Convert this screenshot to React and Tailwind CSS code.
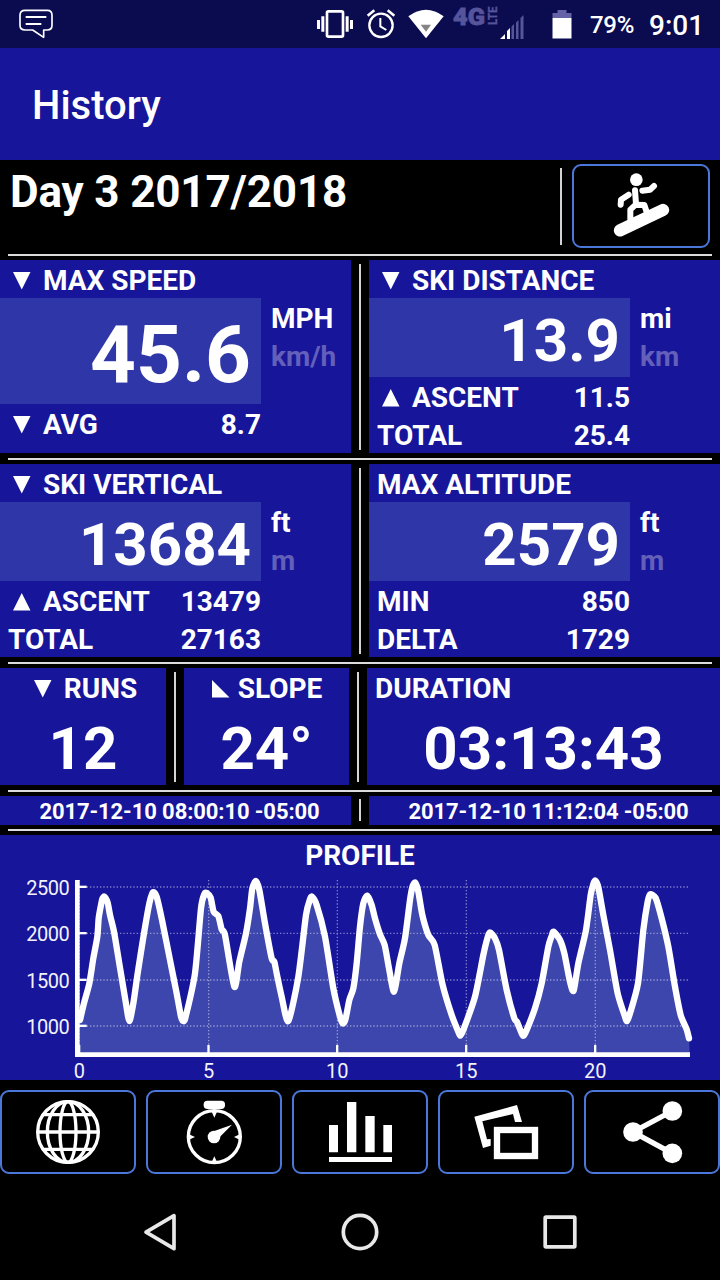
import clsx from "clsx";

const ARROWS = {
    down: "M1 1H18.5L9.75 18.5Z",
    up: "M1 18.5H18.5L9.75 1Z",
    slope: "M1 1V18.5H18.5Z",
};

function Arrow({ dir }) {
    return (
        <svg className="w-[20px] h-[20px] fill-white shrink-0" viewBox="0 0 20 20">
            <path d={ARROWS[dir]} />
        </svg>
    );
}

function Label({ arrow, children, className }) {
    return (
        <div className={clsx("flex items-center h-[38px] text-[28px] leading-[38px] pt-[4px]", className)}>
            {arrow ? <div className={clsx("pl-[4px]", arrow === "slope" ? "pr-[7px]" : "pr-[11px]")}><Arrow dir={arrow} /></div> : null}
            <span>{children}</span>
        </div>
    );
}

function HLine({ className }) {
    return <div className={clsx("mx-[8px] h-[2px] bg-[#dcdcdc] shrink-0", className)} />;
}

function VLine({ className }) {
    return <div className={clsx("w-[2px] bg-[#d4d4d4] shrink-0", className)} />;
}

function StatPanel({ arrow, title, value, big, units, rows }) {
    return (
        <div className="w-[351px] bg-[#171599]">
            <Label arrow={arrow} className="pl-[8px]">{title}</Label>
            <div className="flex">
                <div className="w-[261px]">
                    <div className={clsx("bg-[#2f37a8] flex items-center justify-end pr-[10px]", big ? "h-[106px] text-[80px] pt-[8px]" : "h-[79px] text-[60px] pt-[7px]")}>
                        <span className="leading-none">{value}</span>
                    </div>
                    {rows.map((row) => (
                        <div key={row.label} className="flex justify-between pl-[8px]">
                            <Label arrow={row.arrow}>{row.label}</Label>
                            <Label>{row.value}</Label>
                        </div>
                    ))}
                </div>
                <div className="pl-[10px]">
                    <Label>{units[0]}</Label>
                    <Label className="text-[#6460ba]">{units[1]}</Label>
                </div>
            </div>
        </div>
    );
}

function StatusBar() {
    return (
        <div className="h-[48px] bg-[#0b0b50] flex items-center font-medium">
            <svg className="w-[36px] h-[32px] ml-[18px]" viewBox="54 24 108 96" fill="none" stroke="#fff" strokeWidth="5" strokeLinejoin="round">
                <path d="M75 31H142Q156 31 156 46V76Q156 90 142 90H131V112L98 90H75Q60 90 60 76V46Q60 31 75 31Z" />
                <path d="M77 51H139M77 72H124" strokeWidth="6" />
            </svg>
            <svg className="w-[36px] h-[48px] ml-[263px]" viewBox="51 0 108 144" fill="#fff">
                <rect x="81" y="34" width="48" height="76" rx="4" fill="none" stroke="#fff" strokeWidth="8" />
                <path d="M51 60h9v27h-9zM64 49h9v46h-9zM137 49h9v46h-9zM150 60h9v27h-9z" />
            </svg>
            <svg className="w-[30px] h-[48px] ml-[13px]" viewBox="198 0 90 144" fill="none" stroke="#fff" strokeWidth="7">
                <circle cx="243" cy="76" r="35" />
                <path d="M203 47L223 31M283 47L263 31" strokeWidth="8" />
                <path d="M241 54V79L259 90" strokeWidth="6" />
            </svg>
            <svg className="w-[36px] h-[48px] ml-[12px]" viewBox="325 0 108 144">
                <path d="M326 49Q379 10 432 49L379 115Z" fill="#fff" />
                <path d="M363 74H394L379 95Z" fill="#858585" />
            </svg>
            <svg className="w-[74px] h-[48px] ml-[8px]" viewBox="0 0 74 48" fill="#56549b">
                <g stroke="#56549b">
                    <text x="1" y="24.500" fontSize="24.500" fontWeight="900" strokeWidth="0.800" textLength="32" lengthAdjust="spacingAndGlyphs">4G</text>
                    <text transform="translate(44.500 25) rotate(-90)" x="0" y="0" fontSize="13" fontWeight="700" strokeWidth="0.300" textLength="18.500" lengthAdjust="spacingAndGlyphs">LTE</text>
                </g>
                <path d="M48 39L53 34V39Z M55 31L58 28V39H55Z" fill="#fff" />
                <path d="M59.500 26.500L62 24V39H59.500ZM64 22.500L66.500 20V39H64ZM68.500 18L71.500 15V39H68.500Z" />
            </svg>
            <svg className="w-[20px] h-[48px] ml-[26px]" viewBox="0 0 20 48">
                <path d="M0.500 13H5.500V10H14.500V13H19.500V18H0.500Z" fill="#6563a6" />
                <path d="M0.500 18H19.500V38.500H0.500Z" fill="#fff" />
            </svg>
            <span className="text-[24px] tracking-[-0.3px] ml-[18px] pt-[2px]">79%</span>
            <span className="text-[28px] ml-[15px] pt-[3px]">9:01</span>
        </div>
    );
}

// the chart is drawn at three units per pixel
const TRACK = [
    [240, 570], [252, 520], [268, 460], [280, 385], [292, 320], [296, 265], [303, 225], [307, 207], [313, 200], [323, 218],
    [330, 255], [342, 305], [357, 395], [377, 515], [388, 573], [400, 520], [413, 430], [432, 310], [448, 220], [457, 190],
    [462, 187], [470, 200], [485, 265], [510, 390], [530, 490], [543, 560], [550, 573], [557, 560], [585, 430], [603, 235],
    [613, 192], [620, 189], [632, 203], [641, 245], [655, 258], [665, 298], [675, 315], [703, 470], [718, 395], [738, 310],
    [750, 235], [757, 175], [768, 153], [778, 180], [795, 280], [815, 385], [823, 395], [830, 430], [845, 500], [865, 573],
    [895, 440], [918, 255], [930, 208], [936, 200], [950, 225], [975, 320], [1000, 475], [1020, 560], [1028, 580],
    [1036, 570], [1048, 510], [1060, 475], [1070, 400], [1080, 290], [1090, 220], [1102, 197], [1115, 225], [1125, 265],
    [1140, 313], [1154, 345], [1167, 415], [1182, 485], [1198, 400], [1215, 325], [1230, 210], [1238, 168], [1246, 158],
    [1255, 185], [1267, 255], [1285, 315], [1304, 345], [1328, 465], [1355, 555], [1375, 605], [1381, 617], [1390, 600],
    [1425, 500], [1450, 375], [1462, 325], [1470, 307], [1485, 325], [1497, 360], [1520, 480], [1543, 565], [1551, 576],
    [1565, 610], [1571, 617], [1580, 600], [1605, 535], [1625, 460], [1645, 350], [1655, 318], [1661, 305], [1680, 330],
    [1693, 370], [1710, 455], [1721, 482], [1735, 400], [1758, 300], [1772, 195], [1780, 162], [1786, 152], [1795, 172],
    [1810, 255], [1830, 360], [1853, 490], [1875, 560], [1881, 573], [1890, 550], [1914, 460], [1930, 300], [1943, 215],
    [1950, 193], [1967, 204], [1985, 265], [2005, 350], [2025, 470], [2042, 555], [2060, 598], [2067, 625],
];

// rounds the corners of the track with a spline through every point
function smooth(pts) {
    let d = `M${pts[0][0]} ${pts[0][1]}`;
    for (let i = 0; i < pts.length - 1; i++) {
        const a = pts[Math.max(i - 1, 0)];
        const b = pts[i];
        const c = pts[i + 1];
        const e = pts[Math.min(i + 2, pts.length - 1)];
        const k = 0.12;
        d += `C${b[0] + (c[0] - a[0]) * k} ${b[1] + (c[1] - a[1]) * k} ${c[0] - (e[0] - b[0]) * k} ${c[1] - (e[1] - b[1]) * k} ${c[0]} ${c[1]}`;
    }
    return d;
}

const line = smooth(TRACK);
const Y_TICKS = [[2500, 171], [2000, 310], [1500, 450], [1000, 588]];
const X_TICKS = [[0, 238], [5, 626], [10, 1012], [15, 1399], [20, 1786]];

function ProfileChart() {
    return (
        <svg className="w-[720px] h-[205px] block font-normal overflow-visible" viewBox="0 135 2160 615">
            <path d={`${line}L2069 668H240Z`} fill="#3c46ac" />
            <g stroke="#fff" strokeWidth="4" strokeDasharray="4 6" opacity="0.45">
                {Y_TICKS.map(([v, y]) => <line key={v} x1="240" x2="2070" y1={y} y2={y} />)}
                {X_TICKS.map(([v, x]) => <line key={v} x1={x} x2={x} y1="150" y2="668" />)}
            </g>
            <g fill="#fff">
                <path d="M225 150H239V667H2070V681H225Z" />
                {Y_TICKS.map(([v, y]) => <rect key={v} x="236" y={y - 4} width="24" height="7" />)}
                {X_TICKS.map(([v, x]) => <rect key={v} x={x - 4} y="645" width="7" height="26" />)}
            </g>
            <path d={line} fill="none" stroke="#fff" strokeWidth="19" strokeLinejoin="round" strokeLinecap="round" />
            <g fill="#f2f2fc" fontSize="60">
                {Y_TICKS.map(([v, y]) => <text key={v} x="209" y={y + 23} textAnchor="end" textLength="130">{v}</text>)}
                {X_TICKS.map(([v, x]) => <text key={v} x={x} y="743" textAnchor="middle">{v}</text>)}
            </g>
        </svg>
    );
}

function IconButton({ viewBox, className, children }) {
    return (
        <button className={clsx("h-[84px] border-2 border-[#4a77d9] rounded-[9px] shrink-0", className)}>
            <svg className="w-full h-full block" viewBox={viewBox} fill="none" stroke="#fff">{children}</svg>
        </button>
    );
}

function Toolbar() {
    return (
        <div className="flex justify-between pt-[10px]">
            <IconButton viewBox="6 36 396 240" className="w-[136px]">
                <g strokeWidth="10">
                    <circle cx="204" cy="156" r="91" />
                    <ellipse cx="204" cy="156" rx="62" ry="91" />
                    <ellipse cx="204" cy="156" rx="24" ry="91" />
                    <path d="M112 156H296M129 104H279M129 208H279" />
                </g>
            </IconButton>
            <IconButton viewBox="444 36 396 240" className="w-[136px]">
                <circle cx="643" cy="170" r="78" strokeWidth="10" />
                <g fill="#fff" stroke="none">
                    <rect x="611" y="62" width="64" height="25" rx="11" />
                    <circle cx="642" cy="171" r="19" />
                    <path d="M643 153L696 134L657 173ZM635 95H651L643 113ZM635 246H651L643 229ZM567 163V179L585 171ZM719 163V179L702 171Z" />
                </g>
            </IconButton>
            <IconButton viewBox="882 36 396 240" className="w-[136px]">
                <path d="M987 135h27v82h-27zM1041 66h28v151h-28zM1096 108h28v109h-28zM1150 135h26v82h-26zM987 231h189v15H987z" fill="#fff" stroke="none" />
            </IconButton>
            <IconButton viewBox="240 36 396 240" className="w-[136px]">
                <rect x="411" y="150" width="114" height="78" strokeWidth="19" />
                <path d="M343 110L471 75L486 126H465L459 102L367 124L381 178L392 177V197L369 204Z" fill="#fff" stroke="none" />
            </IconButton>
            <IconButton viewBox="678 36 396 240" className="w-[136px]">
                <path d="M937 93L819 156L937 220" strokeWidth="16" />
                <g fill="#fff" stroke="none">
                    <circle cx="937" cy="93" r="29.500" />
                    <circle cx="819" cy="156" r="29.500" />
                    <circle cx="937" cy="220" r="29.500" />
                </g>
            </IconButton>
        </div>
    );
}

function NavBar() {
    return (
        <div className="flex justify-center gap-[160px] pt-[38px]">
            <svg className="w-[40px] h-[40px]" viewBox="420 396 120 120" fill="none" stroke="#e8e8e8" strokeWidth="11" strokeLinejoin="round">
                <path d="M522 407V506L438 456.500Z" />
            </svg>
            <svg className="w-[40px] h-[40px]" viewBox="0 0 40 40" fill="none" stroke="#e8e8e8" strokeWidth="3.700">
                <circle cx="20" cy="20" r="16.700" />
            </svg>
            <svg className="w-[40px] h-[40px]" viewBox="0 0 40 40" fill="none" stroke="#e8e8e8" strokeWidth="3.700" strokeLinejoin="round">
                <rect x="5.200" y="5.200" width="29.600" height="29.600" rx="0.800" />
            </svg>
        </div>
    );
}

export default function App() {
    return (
        <div className="w-[720px] h-[1280px] bg-black text-white font-['Roboto',sans-serif] font-bold overflow-hidden flex flex-col">
            <StatusBar />
            <div className="h-[112px] bg-[#171599] flex items-center pl-[32px] pt-[3px] text-[40px] font-medium">History</div>

            <div className="h-[94px] flex shrink-0">
                <div className="flex-1 pl-[10px] pt-[6px] text-[44px] leading-[52px] tracking-[-0.15px]">Day 3 2017/2018</div>
                <VLine className="mt-[8px] h-[77px] mr-[10px]" />
                <IconButton viewBox="102 36 402 240" className="w-[138px] mt-[4px] mr-[10px]">
                    <circle cx="289" cy="77" r="19" fill="#fff" stroke="none" />
                    <g strokeLinecap="round" strokeLinejoin="round" strokeWidth="18">
                        <path d="M342 96L330 107L307 110" />
                        <path d="M266 122L243 137L242 152" />
                        <path d="M285 109L288 150" />
                        <path d="M271 195V167L287 152L313 153L320 174" />
                    </g>
                    <path d="M240 229L369 168" strokeWidth="37" strokeLinecap="round" />
                </IconButton>
            </div>
            <HLine />

            <div className="flex justify-between mt-[4px] h-[193px] shrink-0">
                <StatPanel
                    arrow="down" title="MAX SPEED" value="45.6" big units={["MPH", "km/h"]}
                    rows={[{ arrow: "down", label: "AVG", value: "8.7" }]}
                />
                <VLine className="mt-[4px] h-[186px]" />
                <StatPanel
                    arrow="down" title="SKI DISTANCE" value="13.9" units={["mi", "km"]}
                    rows={[{ arrow: "up", label: "ASCENT", value: "11.5" }, { label: "TOTAL", value: "25.4" }]}
                />
            </div>
            <HLine className="mt-[5px]" />

            <div className="flex justify-between mt-[4px] h-[193px] shrink-0">
                <StatPanel
                    arrow="down" title="SKI VERTICAL" value="13684" units={["ft", "m"]}
                    rows={[{ arrow: "up", label: "ASCENT", value: "13479" }, { label: "TOTAL", value: "27163" }]}
                />
                <VLine className="mt-[4px] h-[186px]" />
                <StatPanel
                    title="MAX ALTITUDE" value="2579" units={["ft", "m"]}
                    rows={[{ label: "MIN", value: "850" }, { label: "DELTA", value: "1729" }]}
                />
            </div>
            <HLine className="mt-[5px]" />

            <div className="flex justify-between mt-[4px] h-[117px] shrink-0">
                <div className="w-[166px] bg-[#171599] flex flex-col items-center">
                    <Label arrow="down">RUNS</Label>
                    <div className="text-[60px] leading-[80px] pt-[3px]">12</div>
                </div>
                <VLine className="mt-[4px] h-[110px]" />
                <div className="w-[165px] bg-[#171599] flex flex-col items-center">
                    <Label arrow="slope" className="pr-[4px]">SLOPE</Label>
                    <div className="text-[60px] leading-[80px] pt-[3px]">24°</div>
                </div>
                <VLine className="mt-[4px] h-[110px]" />
                <div className="w-[353px] bg-[#171599]">
                    <Label className="pl-[8px]">DURATION</Label>
                    <div className="text-[60px] leading-[80px] pt-[3px] text-center">03:13:43</div>
                </div>
            </div>
            <HLine className="mt-[5px]" />

            <div className="flex justify-between mt-[4px] h-[29px] shrink-0 text-[22px] leading-[32px] tracking-[-0.1px] text-center">
                <div className="w-[351px] bg-[#171599] pl-[8px]">2017-12-10 08:00:10 -05:00</div>
                <VLine className="mt-[3px] h-[22px]" />
                <div className="w-[351px] bg-[#171599] pl-[8px]">2017-12-10 11:12:04 -05:00</div>
            </div>
            <HLine className="mt-[4px]" />

            <div className="mt-[4px] h-[245px] shrink-0 bg-[#171599]">
                <div className="h-[40px] pt-[2px] text-[28px] leading-[38px] text-center">PROFILE</div>
                <ProfileChart />
            </div>

            <Toolbar />
            <NavBar />
        </div>
    );
}
